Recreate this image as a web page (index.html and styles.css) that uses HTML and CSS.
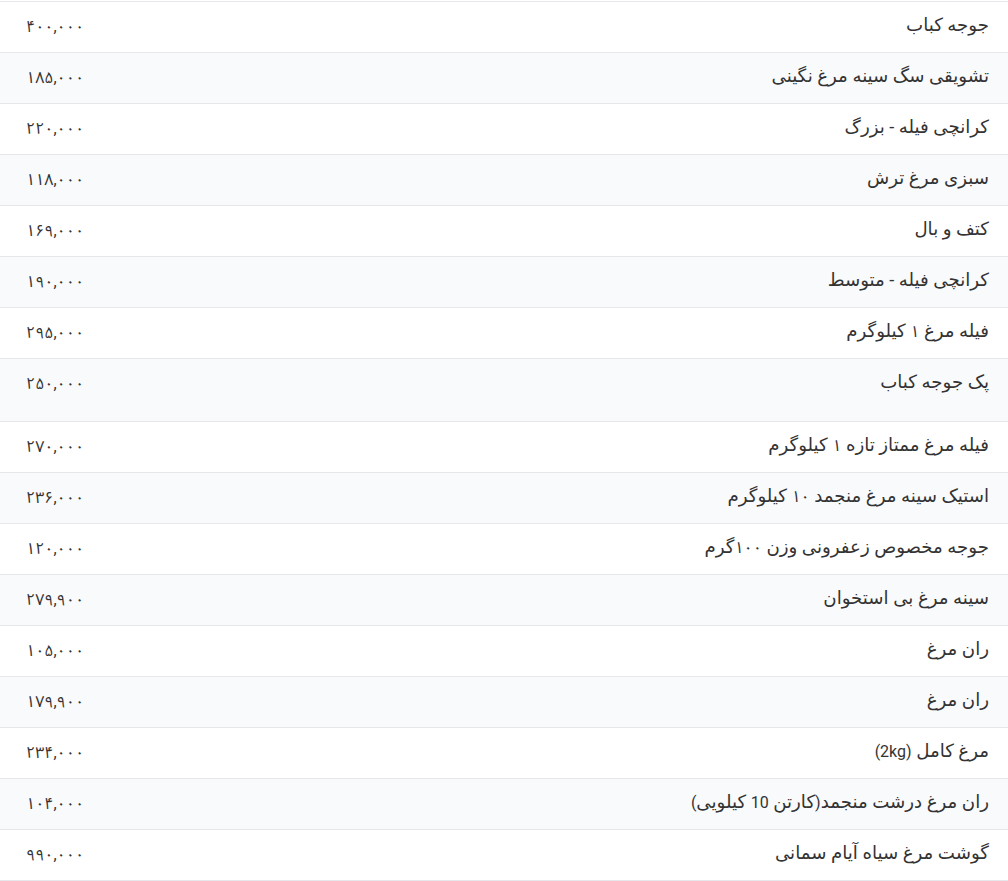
FILE: index.html
```html
<!DOCTYPE html>
<html lang="fa" dir="rtl">
<head>
<meta charset="utf-8">
<link rel="stylesheet" href="styles.css">
</head>
<body>
<div class="list">
  <div class="row"><span class="name">جوجه کباب</span><span class="price">۴۰۰,۰۰۰</span></div>
  <div class="row"><span class="name">تشویقی سگ سینه مرغ نگینی</span><span class="price">۱۸۵,۰۰۰</span></div>
  <div class="row"><span class="name">کرانچی فیله - بزرگ</span><span class="price">۲۲۰,۰۰۰</span></div>
  <div class="row"><span class="name">سبزی مرغ ترش</span><span class="price">۱۱۸,۰۰۰</span></div>
  <div class="row"><span class="name">کتف و بال</span><span class="price">۱۶۹,۰۰۰</span></div>
  <div class="row"><span class="name">کرانچی فیله - متوسط</span><span class="price">۱۹۰,۰۰۰</span></div>
  <div class="row"><span class="name">فیله مرغ <span class="digits">۱</span> کیلوگرم</span><span class="price">۲۹۵,۰۰۰</span></div>
  <div class="row row-tall"><span class="name">پک جوجه کباب</span><span class="price">۲۵۰,۰۰۰</span></div>
  <div class="row"><span class="name">فیله مرغ ممتاز تازه <span class="digits">۱</span> کیلوگرم</span><span class="price">۲۷۰,۰۰۰</span></div>
  <div class="row"><span class="name">استیک سینه مرغ منجمد <span class="digits">۱۰</span> کیلوگرم</span><span class="price">۲۳۶,۰۰۰</span></div>
  <div class="row"><span class="name">جوجه مخصوص زعفرونی وزن <span class="digits">۱۰۰</span>گرم</span><span class="price">۱۲۰,۰۰۰</span></div>
  <div class="row"><span class="name">سینه مرغ بی استخوان</span><span class="price">۲۷۹,۹۰۰</span></div>
  <div class="row"><span class="name">ران مرغ</span><span class="price">۱۰۵,۰۰۰</span></div>
  <div class="row"><span class="name">ران مرغ</span><span class="price">۱۷۹,۹۰۰</span></div>
  <div class="row"><span class="name">مرغ کامل <span class="latin">(2kg)</span></span><span class="price">۲۳۴,۰۰۰</span></div>
  <div class="row"><span class="name">ران مرغ درشت منجمد<span class="latin">(</span>کارتن <span class="latin">10</span> کیلویی<span class="latin">)</span></span><span class="price">۱۰۴,۰۰۰</span></div>
  <div class="row"><span class="name">گوشت مرغ سیاه آیام سمانی</span><span class="price">۹۹۰,۰۰۰</span></div>
</div>
</body>
</html>
```
FILE: styles.css
```css
html, body {
  margin: 0;
  padding: 0;
  background: #ffffff;
}
body {
  font-family: Roboto, "DejaVu Sans", sans-serif;
  font-size: 16px;
  color: #333333;
}
.list {
  margin-top: 1px;
  border-bottom: 1px solid #e5e7eb;
}
.row {
  display: flex;
  justify-content: space-between;
  align-items: flex-start;
  border-top: 1px solid #e5e7eb;
  padding: 11px 19px 15px 26px;
  line-height: 24px;
  height: 24px;
}
.row:nth-child(even) {
  background: #f9fafb;
}
.row-tall {
  height: 36px;
}
.name {
  font-size: 18.2px;
}
.latin {
  font-size: 16px;
}
.digits {
  font-family: "Noto Sans Arabic", "DejaVu Sans", sans-serif;
  font-size: 16px;
}
.price {
  font-family: Roboto, "Noto Sans Arabic", "DejaVu Sans", sans-serif;
  padding-top: 2px;
}
```
